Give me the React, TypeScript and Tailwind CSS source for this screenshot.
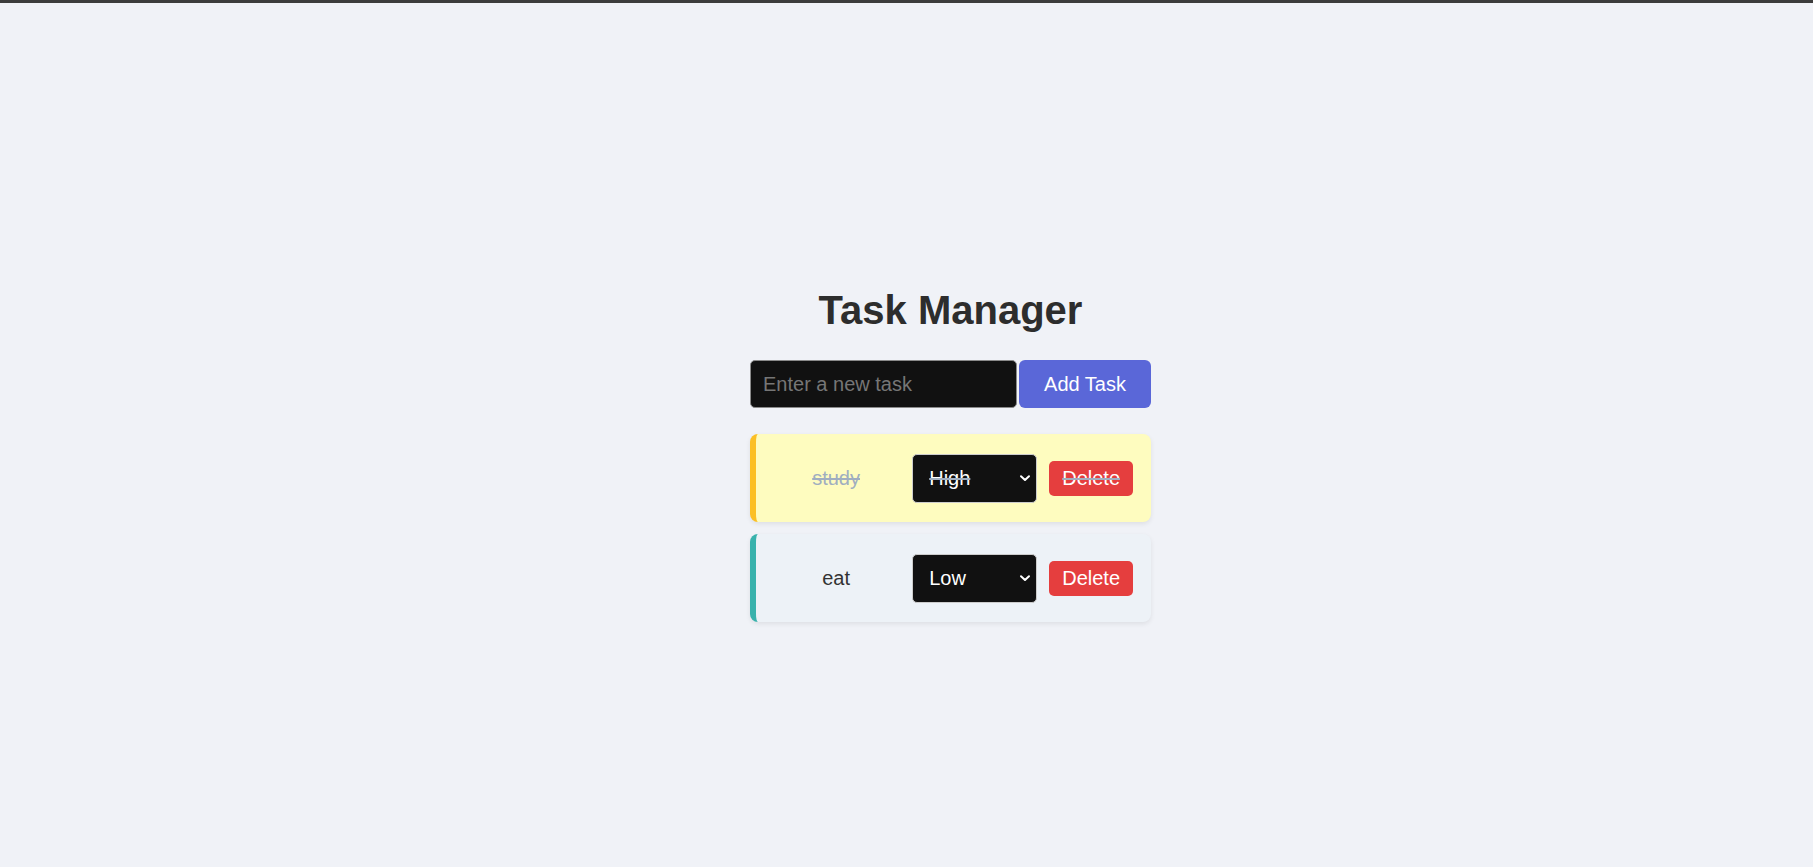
import { useState } from "react";

type Task = {
  id: number;
  text: string;
  priority: "High" | "Medium" | "Low";
  done: boolean;
};

const cardStyle: Record<Task["priority"], string> = {
  High: "bg-[#fefcbf] border-[#fbbf24]",
  Medium: "bg-[#fefcbf] border-[#f6ad55]",
  Low: "bg-[#edf2f7] border-[#38b2ac]",
};

export default function App() {
  const [tasks, setTasks] = useState<Task[]>([
    { id: 1, text: "study", priority: "High", done: true },
    { id: 2, text: "eat", priority: "Low", done: false },
  ]);
  const [draft, setDraft] = useState("");

  const add = () => {
    if (!draft.trim()) return;
    setTasks([...tasks, { id: Date.now(), text: draft.trim(), priority: "Low", done: false }]);
    setDraft("");
  };

  return (
    <div className="min-h-screen bg-[#f0f2f7] font-['Liberation_Sans',Arial,sans-serif]">
      <div className="h-[3px] bg-[#3c3c3c]" />
      <div className="flex justify-center pl-[88px] pt-[284px]">
        <div className="flex w-[401px] flex-col">
          <h1 className="mb-[27px] text-center text-[40px] font-bold leading-[46px] text-[#2d2d2d]">Task Manager</h1>
          <div className="flex gap-[2px]">
            <input
              value={draft}
              onChange={(e) => setDraft(e.target.value)}
              placeholder="Enter a new task"
              className="h-12 min-w-0 flex-1 rounded-[5px] border border-[#8a8a8a] bg-[#111111] px-3 text-[20px] text-white placeholder:text-[#767676] focus:outline-none"
            />
            <button onClick={add} className="h-12 w-[132px] shrink-0 rounded-[6px] bg-[#5a67d8] text-[20px] text-white">
              Add Task
            </button>
          </div>
          <div className="mt-[26px] flex flex-col gap-3">
            {tasks.map((t) => (
              <div
                key={t.id}
                className={`flex h-[88px] items-center gap-3 rounded-lg border-l-[6px] pl-4 pr-[18px] shadow-[0_2px_5px_rgba(0,0,0,0.08)] ${cardStyle[t.priority]} ${
                  t.done ? "text-[#a0aec0] line-through" : "text-[#333333]"
                }`}
              >
                <span
                  onClick={() => setTasks(tasks.map((x) => (x.id === t.id ? { ...x, done: !x.done } : x)))}
                  className="min-w-0 flex-1 cursor-pointer text-center text-[20px]"
                >
                  {t.text}
                </span>
                <div className="relative w-[125px] shrink-0">
                  <select
                    value={t.priority}
                    onChange={(e) =>
                      setTasks(tasks.map((x) => (x.id === t.id ? { ...x, priority: e.target.value as Task["priority"] } : x)))
                    }
                    className="block h-[49px] w-full appearance-none rounded-[5px] border border-[#cccccc] bg-[#111111] pl-4 text-[20px] text-white"
                  >
                    <option>High</option>
                    <option>Medium</option>
                    <option>Low</option>
                  </select>
                  <svg
                    className="pointer-events-none absolute right-[6px] top-1/2 -translate-y-1/2"
                    width="12"
                    height="12"
                    viewBox="0 0 12 12"
                    fill="none"
                  >
                    <path d="M2 4.2 6 8l4-3.8" stroke="white" strokeWidth="2" strokeLinecap="round" strokeLinejoin="round" />
                  </svg>
                </div>
                <button
                  onClick={() => setTasks(tasks.filter((x) => x.id !== t.id))}
                  className="h-[35px] shrink-0 rounded-[5px] bg-[#e53e3e] px-[13px] text-[20px] text-white"
                >
                  Delete
                </button>
              </div>
            ))}
          </div>
        </div>
      </div>
    </div>
  );
}
